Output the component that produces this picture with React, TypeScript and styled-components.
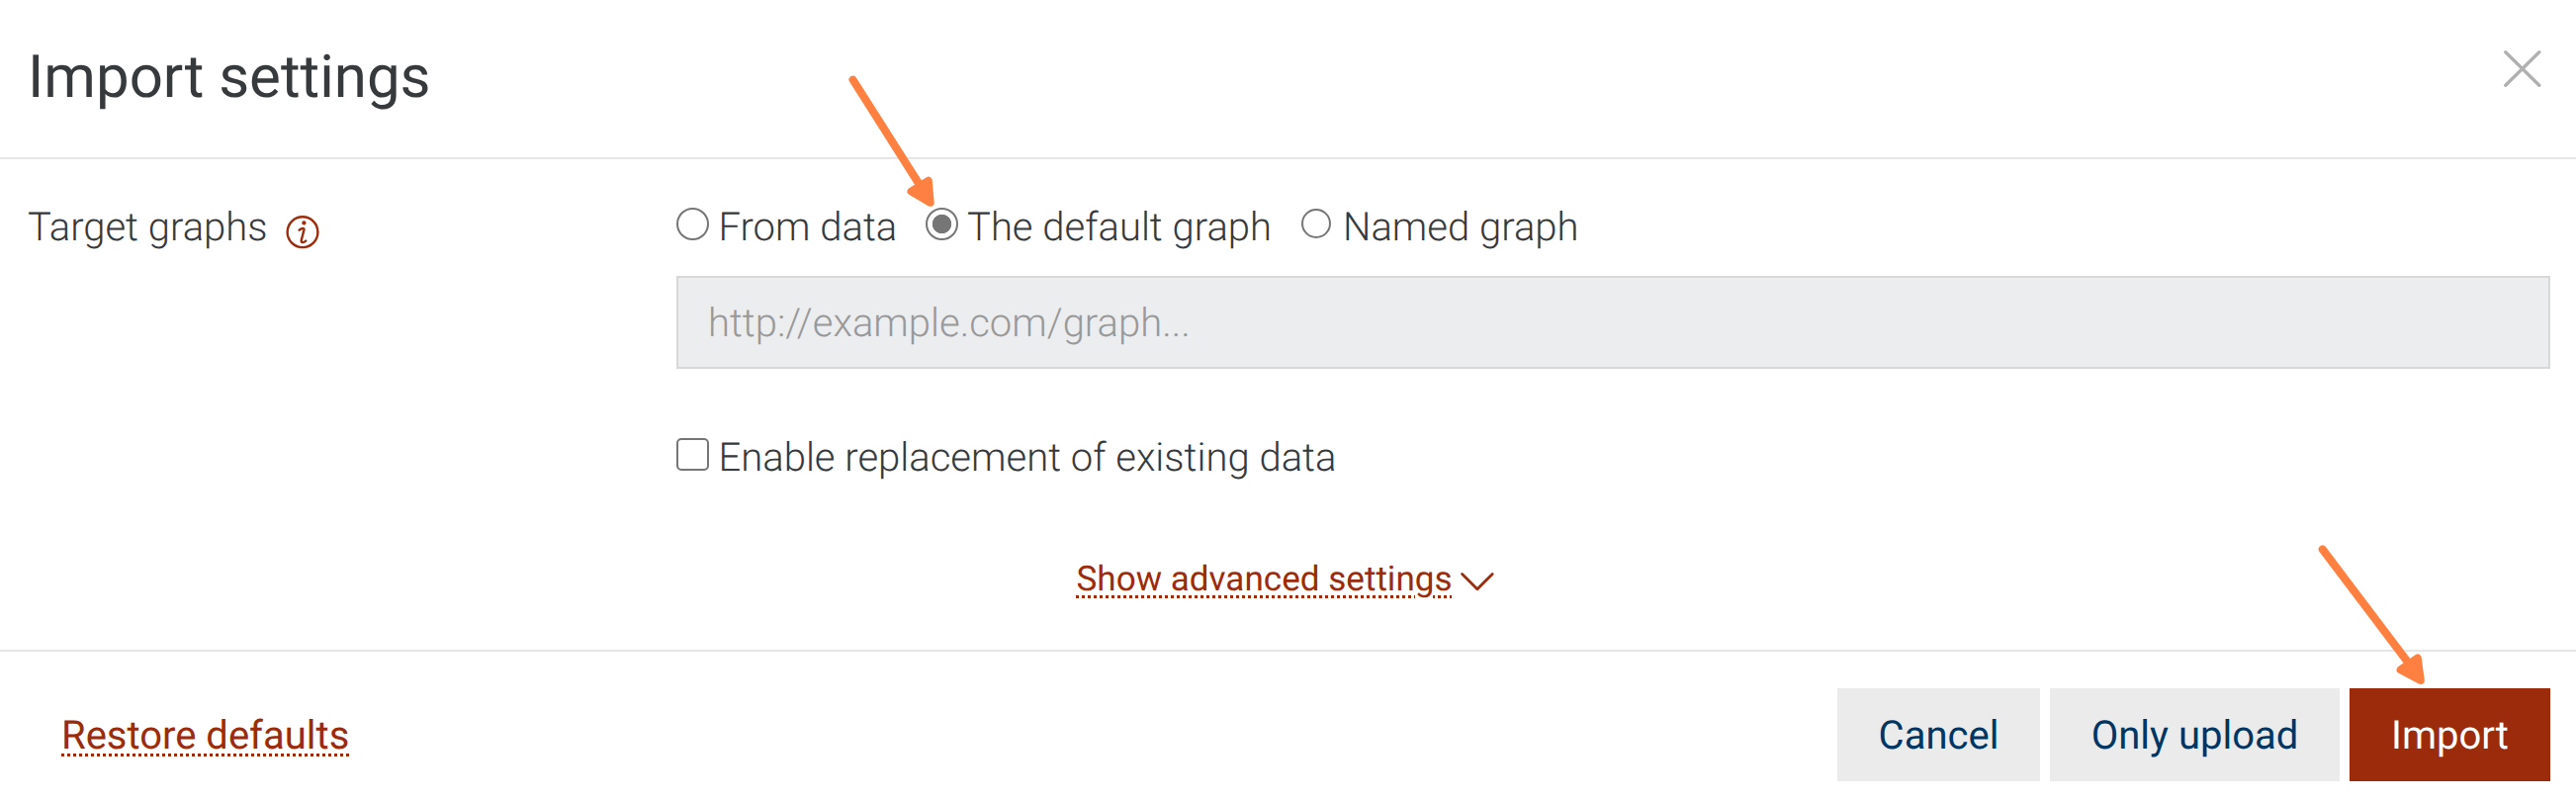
import React, { useState } from "react";
import styled, { createGlobalStyle } from "styled-components";

const GlobalStyle = createGlobalStyle`
  * { box-sizing: border-box; }
  body {
    margin: 0;
    background: #fff;
    color: #373a3c;
    font-family: Roboto, "Liberation Sans", sans-serif;
    font-size: 40px;
    font-weight: 300;
    line-height: 60px;
    text-rendering: geometricPrecision;
  }
`;

const Dialog = styled.div`
  position: relative;
  width: 2605px;
  height: 810px;
  display: flex;
  flex-direction: column;
  overflow: hidden;
`;

const Header = styled.header`
  height: 161px;
  padding: 33px 34px 0 28px;
  display: flex;
  justify-content: space-between;
  align-items: flex-start;
  border-bottom: 2px solid #e5e5e5;
`;

const Title = styled.h1`
  margin: 0;
  font-size: 60px;
  font-weight: 400;
  line-height: 90px;
`;

const CloseButton = styled.button`
  margin-top: 17px;
  padding: 0;
  border: 0;
  background: none;
  line-height: 0;
`;

const Body = styled.main`
  height: 498px;
  padding: 39px 26px 0 28px;
  border-bottom: 2px solid #e5e5e5;
`;

const FormRow = styled.div`
  display: grid;
  grid-template-columns: 656px 1fr;
`;

const RowLabel = styled.div`
  display: flex;
  align-items: flex-start;
  gap: 18px;

  svg {
    margin-top: 18px;
  }
`;

const RadioGroup = styled.div`
  display: flex;
  height: 79px;
`;

const Choice = styled.label<{ $width?: number; $gap?: number }>`
  display: flex;
  width: ${(p) => (p.$width ? `${p.$width}px` : "auto")};
  gap: ${(p) => p.$gap ?? 9.5}px;
  white-space: nowrap;
`;

const Radio = styled.input<{ $size?: number }>`
  appearance: none;
  flex: none;
  width: ${(p) => p.$size ?? 33}px;
  height: ${(p) => p.$size ?? 33}px;
  margin: ${(p) => (p.$size ? 11 : 10)}px 0 0;
  border: 2px solid #767676;
  border-radius: 50%;
  background: #fff;

  &:checked {
    background: radial-gradient(circle, #767676 9.3px, #fff 10px);
  }
`;

const Checkbox = styled.input`
  appearance: none;
  flex: none;
  width: 33px;
  height: 33px;
  margin: 10px 0 0;
  border: 2px solid #767676;
  border-radius: 5px;
  background: #fff;
`;

const GraphInput = styled.input`
  display: block;
  width: 100%;
  height: 94px;
  padding: 0 30px;
  border: 2px solid #d8d8d8;
  border-radius: 0;
  background: #ecedef;
  font: inherit;
  text-rendering: inherit;

  &::placeholder {
    color: #999;
    opacity: 1;
  }
`;

const ReplaceRow = styled.div`
  margin-top: 60px;
`;

const AdvancedRow = styled.div`
  display: flex;
  padding-left: 1060.5px;
  margin-top: 62px;
  gap: 7px;
`;

const Link = styled.a<{ $size: number }>`
  color: #9c2b0b;
  font-size: ${(p) => p.$size}px;
  font-weight: 400;
  white-space: nowrap;
  text-decoration: underline dotted 3px;
  text-underline-offset: 5px;
`;

const Footer = styled.footer`
  display: flex;
  align-items: flex-start;
  justify-content: space-between;
  padding: 37px 26px 0 62px;
  line-height: 96px;
`;

const Actions = styled.div`
  display: flex;
  gap: 10px;
`;

const Button = styled.button<{ $primary?: boolean; $width: number }>`
  width: ${(p) => p.$width}px;
  height: 94px;
  padding: 2px 0 0;
  border: 0;
  font: inherit;
  line-height: 92px;
  font-weight: 400;
  text-rendering: inherit;
  color: ${(p) => (p.$primary ? "#fff" : "#003663")};
  background: ${(p) => (p.$primary ? "#9c2b0b" : "#ebebeb")};
`;

const Annotations = styled.svg`
  position: absolute;
  inset: 0;
  pointer-events: none;
`;

const CloseIcon = () => (
  <svg width="40" height="40" fill="none" stroke="#b0b0b0" strokeWidth="3.4" strokeLinecap="round">
    <path d="M2.8 2.8 36.8 36.3M36.8 2.8 2.8 36.3" />
  </svg>
);

const InfoIcon = () => (
  <svg width="34" height="34" fill="none" stroke="#9c2b0b" strokeWidth="2.4" strokeLinecap="round" strokeLinejoin="round">
    <circle cx="17" cy="16.7" r="15.4" />
    <circle cx="18.4" cy="7.4" r="2.1" fill="#9c2b0b" stroke="none" />
    <path d="M13.6 14.7c1.8-1.7 5.4-2.8 4.9-.4l-2.7 10.3c-.7 3.3 2.3 3.2 4.5.9" />
  </svg>
);

const ChevronIcon = () => (
  <svg width="36" height="60" fill="none" stroke="#9c2b0b" strokeWidth="2.8" strokeLinecap="round" strokeLinejoin="round">
    <path d="M2.6 25.6 17.9 40.7 33.2 25.6" />
  </svg>
);

const Arrows = () => (
  <Annotations width="2605" height="810" stroke="#ff8040" strokeWidth="8" strokeLinecap="round" strokeLinejoin="round" fill="#ff8040">
    <path d="M862.5 80.7 930 187" />
    <path d="M921.5 193.6 938.8 182.8 940.7 204.8Z" />
    <path d="M2348.7 555.5 2436 671" />
    <path d="M2427.6 677.3 2444.8 665.5 2447.8 688Z" />
  </Annotations>
);

export default function App() {
  const [target, setTarget] = useState("default");
  const radio = (value: string) => ({
    type: "radio",
    name: "target",
    checked: target === value,
    onChange: () => setTarget(value),
  });

  return (
    <>
      <GlobalStyle />
      <Dialog>
        <Header>
          <Title>Import settings</Title>
          <CloseButton aria-label="Close">
            <CloseIcon />
          </CloseButton>
        </Header>
        <Body>
          <FormRow>
            <RowLabel>
              <span>Target graphs</span>
              <InfoIcon />
            </RowLabel>
            <div>
              <RadioGroup>
                <Choice $width={252}>
                  <Radio {...radio("data")} />
                  From data
                </Choice>
                <Choice $width={380} $gap={9}>
                  <Radio {...radio("default")} />
                  The default graph
                </Choice>
                <Choice $gap={12}>
                  <Radio $size={30} {...radio("named")} />
                  Named graph
                </Choice>
              </RadioGroup>
              <GraphInput disabled placeholder="http://example.com/graph..." />
              <ReplaceRow>
                <Choice>
                  <Checkbox type="checkbox" />
                  Enable replacement of existing data
                </Choice>
              </ReplaceRow>
            </div>
          </FormRow>
          <AdvancedRow>
            <Link $size={35.1}>Show advanced settings</Link>
            <ChevronIcon />
          </AdvancedRow>
        </Body>
        <Footer>
          <Link $size={40}>Restore defaults</Link>
          <Actions>
            <Button $width={205}>Cancel</Button>
            <Button $width={293}>Only upload</Button>
            <Button $width={203} $primary>
              Import
            </Button>
          </Actions>
        </Footer>
        <Arrows />
      </Dialog>
    </>
  );
}
